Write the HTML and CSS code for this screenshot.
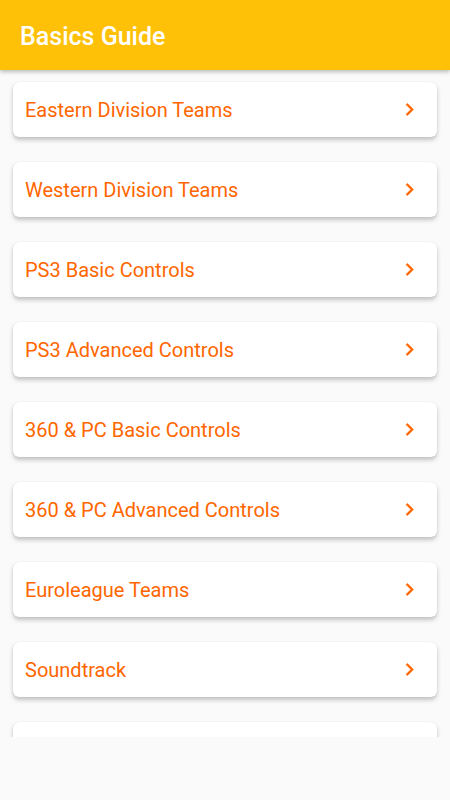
FILE: index.html
```html
<html>

<head>
    <title>Basics Guide</title>
    <link rel="stylesheet" href="styles.css">
</head>

<body>
    <div class="toolbar">
        <h1>Basics Guide</h1>
    </div>

    <div class="list">
        <div class="card"><span>Eastern Division Teams</span><svg class="chev" viewBox="0 0 24 24"><path d="M8.6 16.6 13.2 12 8.6 7.4 10 6l6 6-6 6z"/></svg></div>
        <div class="card"><span>Western Division Teams</span><svg class="chev" viewBox="0 0 24 24"><path d="M8.6 16.6 13.2 12 8.6 7.4 10 6l6 6-6 6z"/></svg></div>
        <div class="card"><span>PS3 Basic Controls</span><svg class="chev" viewBox="0 0 24 24"><path d="M8.6 16.6 13.2 12 8.6 7.4 10 6l6 6-6 6z"/></svg></div>
        <div class="card"><span>PS3 Advanced Controls</span><svg class="chev" viewBox="0 0 24 24"><path d="M8.6 16.6 13.2 12 8.6 7.4 10 6l6 6-6 6z"/></svg></div>
        <div class="card"><span>360 &amp; PC Basic Controls</span><svg class="chev" viewBox="0 0 24 24"><path d="M8.6 16.6 13.2 12 8.6 7.4 10 6l6 6-6 6z"/></svg></div>
        <div class="card"><span>360 &amp; PC Advanced Controls</span><svg class="chev" viewBox="0 0 24 24"><path d="M8.6 16.6 13.2 12 8.6 7.4 10 6l6 6-6 6z"/></svg></div>
        <div class="card"><span>Euroleague Teams</span><svg class="chev" viewBox="0 0 24 24"><path d="M8.6 16.6 13.2 12 8.6 7.4 10 6l6 6-6 6z"/></svg></div>
        <div class="card"><span>Soundtrack</span><svg class="chev" viewBox="0 0 24 24"><path d="M8.6 16.6 13.2 12 8.6 7.4 10 6l6 6-6 6z"/></svg></div>
        <div class="card"></div>
    </div>
</body>

</html>
```

FILE: styles.css
```css
body {
    margin: 0;
    height: 800px;
    background-color: #fafafa;
    font-family: Roboto, "Noto Sans", sans-serif;
    overflow: hidden;
}

.toolbar {
    height: 70px;
    background-color: #ffc107;
    display: flex;
    align-items: center;
    padding-left: 20px;
    box-shadow: 0 2px 4px rgba(0, 0, 0, 0.25);
    position: relative;
    z-index: 1;
}

h1 {
    margin: 0;
    margin-top: 2px;
    color: white;
    font-size: 25px;
    font-weight: 500;
}

.list {
    height: 655px;
    overflow: hidden;
    padding: 12px 13px 0 13px;
    display: flex;
    flex-direction: column;
    gap: 25px;
}

.card {
    flex-shrink: 0;
    height: 55px;
    background-color: white;
    border-radius: 6px;
    box-shadow: 0 3px 4px rgba(0, 0, 0, 0.22), 0 0 1px rgba(0, 0, 0, 0.15);
    display: flex;
    align-items: center;
    justify-content: space-between;
    padding: 0 15px 0 12px;
    color: #ff6600;
    font-size: 20px;
}

.chev {
    width: 25px;
    height: 25px;
    fill: #ff6600;
    stroke: #ff6600;
    stroke-width: 0.3;
}
```
